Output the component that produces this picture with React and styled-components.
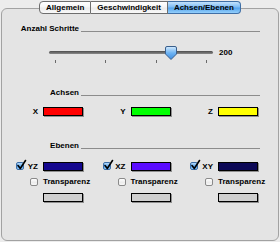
import React from 'react';
import styled, { createGlobalStyle } from 'styled-components';

const GlobalStyle = createGlobalStyle`
  html, body {
    margin: 0;
    padding: 0;
    background: #ececec;
  }
  body {
    font-family: "Liberation Sans", Arial, sans-serif;
    font-size: 8px;
    font-weight: bold;
    color: #000;
  }
`;

const Window = styled.div`
  width: 280px;
  height: 242px;
  box-sizing: border-box;
  padding-top: 1px;
  display: flex;
  flex-direction: column;
  overflow: hidden;
`;

const TabBar = styled.div`
  display: flex;
  justify-content: center;
  height: 13px;
  margin-bottom: -6px;
  position: relative;
  z-index: 1;
`;

const Tab = styled.div`
  height: 13px;
  box-sizing: border-box;
  padding: 0 6px;
  display: flex;
  align-items: center;
  border: 1px solid #6e6e6e;
  border-left: ${p => (p.$first ? '1px solid #6e6e6e' : 'none')};
  border-radius: ${p => (p.$first ? '4px 0 0 4px' : p.$last ? '0 4px 4px 0' : '0')};
  background: ${p =>
    p.$active
      ? 'linear-gradient(#c4e2fc, #7fbdf5 45%, #56a4ec 55%, #93cffc)'
      : 'linear-gradient(#ffffff, #f6f6f6 45%, #ebebeb 55%, #f9f9f9)'};
  border-color: ${p => (p.$active ? '#3f6fa6' : '#6e6e6e')};
  white-space: nowrap;
`;

const Panel = styled.div`
  flex: 1;
  margin: 0 1px 1px;
  border: 1px solid #a2a2a2;
  border-radius: 6px;
  background: #e4e4e4;
  display: flex;
  flex-direction: column;
  padding: 0 18px 0 0;
`;

const SectionHeader = styled.div`
  display: grid;
  grid-template-columns: 77px 1fr;
  column-gap: 2px;
  align-items: end;
  height: 11px;
  line-height: 11px;
  margin-top: ${p => p.$top}px;
`;

const HeaderLabel = styled.span`
  text-align: right;
  white-space: nowrap;
`;

const Rule = styled.span`
  border-bottom: 1px solid #8c8c8c;
  margin-bottom: 2px;
`;

const SliderRow = styled.div`
  display: flex;
  align-items: center;
  height: 14px;
  margin: 11px 0 0 47px;
  gap: 6px;
`;

const Track = styled.div`
  position: relative;
  width: 164px;
  height: 3px;
  border-radius: 2px;
  background: linear-gradient(#4c4c4c, #8a8a8a);
`;

const Thumb = styled.svg`
  position: absolute;
  left: 116px;
  top: -5px;
`;

const Ticks = styled.div`
  display: flex;
  justify-content: space-between;
  width: 152px;
  margin: 1px 0 0 53px;
  height: 3px;
`;

const Tick = styled.span`
  width: 1px;
  height: 3px;
  background: #6a6a6a;
`;

const ColorGrid = styled.div`
  display: grid;
  grid-template-columns: repeat(3, 81px);
  column-gap: 6.5px;
  margin-top: ${p => p.$top}px;
`;

const Cell = styled.div`
  display: grid;
  grid-template-columns: 1fr 40px;
  column-gap: 5px;
  align-items: center;
`;

const PlaneCell = styled(Cell)`
  grid-template-rows: 10px 9px 10px;
  row-gap: 6px;
`;

const AxisLabel = styled.span`
  justify-self: end;
`;

const Swatch = styled.span`
  grid-column: 2;
  display: block;
  width: 40px;
  height: 9px;
  box-sizing: border-box;
  border: 1px solid #000;
  background: ${p => p.$color};
  box-shadow: 1px 1px 0 #8f8f8f;
`;

const CheckLabel = styled.span`
  justify-self: end;
  display: flex;
  align-items: center;
  gap: 4px;
`;

const Box = styled.span`
  position: relative;
  display: block;
  width: 8px;
  height: 8px;
  box-sizing: border-box;
  border: 1px solid ${p => (p.$checked ? '#3b6ea8' : '#8a8a8a')};
  border-radius: 2px;
  background: ${p =>
    p.$checked
      ? 'linear-gradient(#b7dbfb, #5aa6ee 55%, #8cc9fb)'
      : 'linear-gradient(#ffffff, #ececec 55%, #f7f7f7)'};
  justify-self: end;
`;

const Mark = styled.svg`
  position: absolute;
  left: 0;
  top: -3px;
  overflow: visible;
`;

const NoWrap = styled.span`
  grid-column: 2;
  white-space: nowrap;
`;

const Checkbox = ({ checked }) => (
  <Box $checked={checked}>
    {checked && (
      <Mark width="9" height="10" viewBox="0 0 9 10">
        <path d="M1 5.5 L3.3 8.5 L8.5 0.5" fill="none" stroke="#000" strokeWidth="1.6" strokeLinecap="round" strokeLinejoin="round" />
      </Mark>
    )}
  </Box>
);

const axes = [
  { name: 'X', color: '#ff0000' },
  { name: 'Y', color: '#00ff00' },
  { name: 'Z', color: '#ffff00' },
];

const planes = [
  { name: 'YZ', color: '#14078e' },
  { name: 'XZ', color: '#5a0cff' },
  { name: 'XY', color: '#0c0856' },
];

const App = () => (
  <>
    <GlobalStyle />
    <Window>
      <TabBar>
        <Tab $first>Allgemein</Tab>
        <Tab>Geschwindigkeit</Tab>
        <Tab $last $active>Achsen/Ebenen</Tab>
      </TabBar>
      <Panel>
        <SectionHeader $top={14}>
          <HeaderLabel>Anzahl Schritte</HeaderLabel>
          <Rule />
        </SectionHeader>
        <SliderRow>
          <Track>
            <Thumb width="12" height="14" viewBox="0 0 12 14">
              <defs>
                <linearGradient id="thumb" x1="0" y1="0" x2="0" y2="1">
                  <stop offset="0" stopColor="#d5ebfd" />
                  <stop offset="0.5" stopColor="#6db3f3" />
                  <stop offset="1" stopColor="#3f8de0" />
                </linearGradient>
              </defs>
              <path d="M2 0.5 H10 Q11.5 0.5 11.5 2 V8 L6 13.5 L0.5 8 V2 Q0.5 0.5 2 0.5 Z" fill="url(#thumb)" stroke="#3a5f8c" strokeWidth="1" />
            </Thumb>
          </Track>
          <span>200</span>
        </SliderRow>
        <Ticks>
          <Tick />
          <Tick />
          <Tick />
          <Tick />
        </Ticks>
        <SectionHeader $top={24}>
          <HeaderLabel>Achsen</HeaderLabel>
          <Rule />
        </SectionHeader>
        <ColorGrid $top={9}>
          {axes.map(a => (
            <Cell key={a.name}>
              <AxisLabel>{a.name}</AxisLabel>
              <Swatch $color={a.color} />
            </Cell>
          ))}
        </ColorGrid>
        <SectionHeader $top={24}>
          <HeaderLabel>Ebenen</HeaderLabel>
          <Rule />
        </SectionHeader>
        <ColorGrid $top={10}>
          {planes.map(p => (
            <PlaneCell key={p.name}>
              <CheckLabel>
                <Checkbox checked />
                <span>{p.name}</span>
              </CheckLabel>
              <Swatch $color={p.color} />
              <Checkbox />
              <NoWrap>Transparenz</NoWrap>
              <Swatch $color="#cfcfcf" />
            </PlaneCell>
          ))}
        </ColorGrid>
      </Panel>
    </Window>
  </>
);

export default App;
